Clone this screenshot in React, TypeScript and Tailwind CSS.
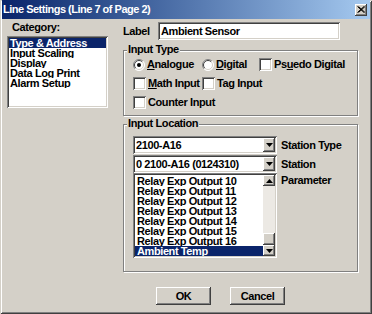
import type { ReactNode } from 'react';

// win2000 style 3d edges
const raised =
  'shadow-[inset_-1px_-1px_#404040,inset_1px_1px_#ffffff,inset_-2px_-2px_#808080,inset_2px_2px_#d4d0c8]';
const sunken =
  'shadow-[inset_1px_1px_#808080,inset_-1px_-1px_#ffffff,inset_2px_2px_#404040,inset_-2px_-2px_#d4d0c8]';

const categories = ['Type & Address', 'Input Scaling', 'Display', 'Data Log Print', 'Alarm Setup'];

const params = [
  'Relay Exp Output 10',
  'Relay Exp Output 11',
  'Relay Exp Output 12',
  'Relay Exp Output 13',
  'Relay Exp Output 14',
  'Relay Exp Output 15',
  'Relay Exp Output 16',
  'Ambient Temp',
];

function Radio({ checked }: { checked?: boolean }) {
  return (
    <svg width="12" height="12" viewBox="0 0 12 12" className="shrink-0">
      <circle cx="6" cy="6" r="5.5" fill="#ffffff" />
      <path d="M2.1 9.9 A5.5 5.5 0 0 1 9.9 2.1" fill="none" stroke="#808080" strokeWidth="1" />
      <path d="M2.8 9.2 A4.5 4.5 0 0 1 9.2 2.8" fill="none" stroke="#404040" strokeWidth="1" />
      <path d="M9.9 2.1 A5.5 5.5 0 0 1 2.1 9.9" fill="none" stroke="#ffffff" strokeWidth="1" />
      <path d="M9.2 2.8 A4.5 4.5 0 0 1 2.8 9.2" fill="none" stroke="#d4d0c8" strokeWidth="1" />
      {checked && <circle cx="6" cy="6" r="2" fill="#000000" />}
    </svg>
  );
}

function Check() {
  return <div className={`w-[13px] h-[13px] shrink-0 bg-white ${sunken}`} />;
}

function Option({
  kind,
  checked,
  width,
  children,
}: {
  kind: 'radio' | 'check';
  checked?: boolean;
  width?: string;
  children: ReactNode;
}) {
  return (
    <div className={`flex items-center gap-[2px] h-[13px] ${width ?? ''}`}>
      {kind === 'radio' ? <Radio checked={checked} /> : <Check />}
      <span className="whitespace-nowrap">{children}</span>
    </div>
  );
}

function Arrow({ up }: { up?: boolean }) {
  return (
    <svg width="7" height="4" viewBox="0 0 7 4">
      <polygon points={up ? '3.5,0 7,4 0,4' : '0,0 7,0 3.5,4'} fill="#000000" />
    </svg>
  );
}

function Combo({ value }: { value: string }) {
  return (
    <div className={`w-[144px] h-[18px] bg-white flex items-center p-[2px] ${sunken}`}>
      <span className="flex-1 pl-[1px] whitespace-nowrap overflow-hidden">{value}</span>
      <div className={`w-[12px] h-[14px] bg-[#d4d0c8] flex items-center justify-center ${raised}`}>
        <Arrow />
      </div>
    </div>
  );
}

function Group({ title, className, children }: { title: string; className: string; children: ReactNode }) {
  return (
    <div
      className={`relative border border-[#808080] shadow-[1px_1px_0_#ffffff,inset_1px_1px_0_#ffffff] ${className}`}
    >
      <span className="absolute left-[3px] top-[-7px] px-[1px] bg-[#d4d0c8] leading-[11px]">{title}</span>
      {children}
    </div>
  );
}

export default function App() {
  return (
    <div className="relative w-[372px] h-[314px] overflow-hidden bg-[#d4d0c8] text-black text-[11px] font-bold tracking-[-0.4px] leading-[11px] font-['Liberation_Sans',Arial,sans-serif] shadow-[inset_1px_1px_#d4d0c8,inset_-1px_-1px_#404040,inset_2px_2px_#ffffff,inset_-2px_-2px_#808080]">
      {/* title bar */}
      <div className="mx-[2px] h-[19px] flex items-center justify-between pl-[1px] pr-[3px] bg-linear-to-r from-[#0a246a] to-[#a6caf0]">
        <span className="text-white whitespace-nowrap tracking-[-0.5px]">Line Settings (Line 7 of Page 2)</span>
        <div className={`w-[12px] h-[12px] bg-[#d4d0c8] flex items-center justify-center ${raised}`}>
          <svg width="8" height="7" viewBox="0 0 8 7">
            <path d="M0.5 0.5 L7 6.5 M1.5 0.5 L8 6.5 M7 0.5 L0.5 6.5 M8 0.5 L1.5 6.5" stroke="#000000" strokeWidth="1" />
          </svg>
        </div>
      </div>

      <div className="flex items-start">
        {/* category list */}
        <div className="w-[123px] pl-[7px] shrink-0">
          <div className="mt-[3px] pl-[5px] h-[11px]">Category:</div>
          <div className={`mt-[3px] w-[101px] h-[72px] bg-white p-[2px] ${sunken}`}>
            {categories.map((c, i) => (
              <div
                key={c}
                className={`h-[10px] leading-[10px] pl-[1px] whitespace-nowrap overflow-hidden ${
                  i === 0 ? 'bg-[#0a246a] text-white' : ''
                }`}
              >
                {c}
              </div>
            ))}
          </div>
        </div>

        <div className="w-[235px] shrink-0">
          <div className="mt-[3px] h-[18px] flex items-center">
            <span className="w-[35px]">Label</span>
            <div className={`w-[182px] h-[18px] bg-white flex items-center pl-[3px] ${sunken}`}>
              Ambient Sensor
            </div>
          </div>

          <Group title="Input Type" className="mt-[10px] h-[66px] pl-[9px] pt-[7px]">
            <div className="flex flex-col gap-[6px]">
              <div className="flex items-center">
                <Option kind="radio" checked width="w-[69px]">
                  <u>A</u>nalogue
                </Option>
                <Option kind="radio" width="w-[57px]">
                  <u>D</u>igital
                </Option>
                <Option kind="check">
                  Ps<u>u</u>edo Digital
                </Option>
              </div>
              <div className="flex items-center">
                <Option kind="check" width="w-[69px]">
                  <u>M</u>ath Input
                </Option>
                <Option kind="check">Tag Input</Option>
              </div>
              <Option kind="check">Counter Input</Option>
            </div>
          </Group>

          <Group title="Input Location" className="mt-[8px] h-[148px] pl-[9px] pt-[11px]">
            <div className="flex items-center gap-[4px]">
              <Combo value="2100-A16" />
              <span className="whitespace-nowrap">Station Type</span>
            </div>
            <div className="mt-[1px] flex items-center gap-[4px]">
              <Combo value="0 2100-A16 (0124310)" />
              <span>Station</span>
            </div>
            <div className="flex items-start gap-[4px]">
              <div className={`w-[144px] h-[85px] bg-white flex p-[2px] ${sunken}`}>
                <div className="flex-1 pt-[1px]">
                  {params.map((p, i) => (
                    <div
                      key={p}
                      className={`h-[10px] leading-[10px] pl-[2px] whitespace-nowrap overflow-hidden ${
                        i === params.length - 1 ? 'bg-[#0a246a] text-white' : ''
                      }`}
                    >
                      {p}
                    </div>
                  ))}
                </div>
                <div className="w-[12px] flex flex-col bg-[#ece9e4]">
                  <div className={`h-[11px] bg-[#d4d0c8] flex items-center justify-center ${raised}`}>
                    <Arrow up />
                  </div>
                  <div className="flex-1" />
                  <div className={`h-[12px] bg-[#d4d0c8] ${raised}`} />
                  <div className={`h-[11px] bg-[#d4d0c8] flex items-center justify-center ${raised}`}>
                    <Arrow />
                  </div>
                </div>
              </div>
              <span className="pt-[2px]">Parameter</span>
            </div>
          </Group>
        </div>
      </div>

      <div className="mt-[15px] pl-[156px] flex gap-[19px]">
        <button className={`w-[55px] h-[18px] bg-[#d4d0c8] ${raised}`}>OK</button>
        <button className={`w-[55px] h-[18px] bg-[#d4d0c8] ${raised}`}>Cancel</button>
      </div>
    </div>
  );
}
